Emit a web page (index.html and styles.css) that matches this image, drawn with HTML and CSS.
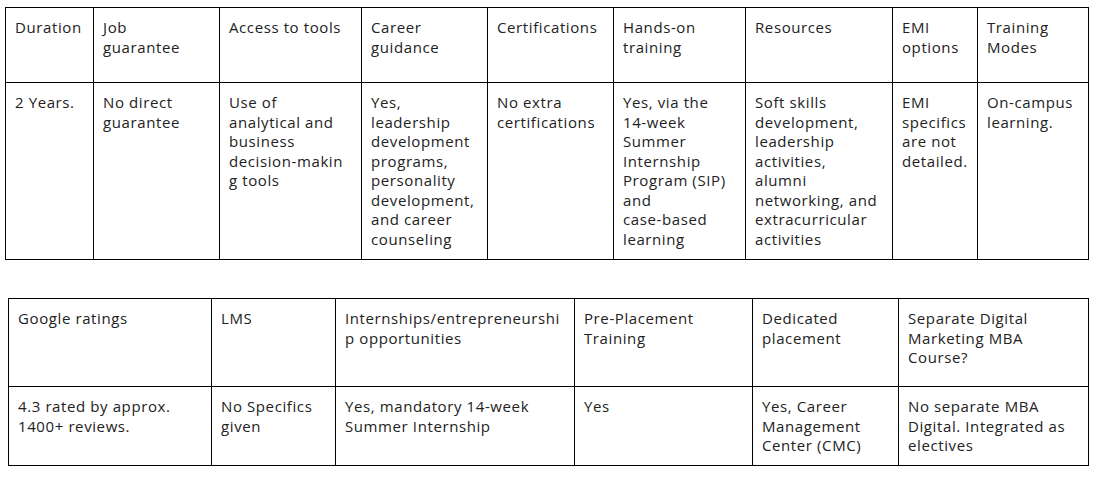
FILE: index.html
```html
<!DOCTYPE html>
<html lang="en">
<head>
<meta charset="utf-8">
<title>Program comparison</title>
<link rel="stylesheet" href="styles.css">
</head>
<body>
<div class="page">
  <div class="grid grid-a">
    <div class="cell head">Duration</div>
    <div class="cell head">Job<br>guarantee</div>
    <div class="cell head">Access to tools</div>
    <div class="cell head">Career<br>guidance</div>
    <div class="cell head">Certifications</div>
    <div class="cell head">Hands-on<br>training</div>
    <div class="cell head">Resources</div>
    <div class="cell head">EMI<br>options</div>
    <div class="cell head">Training<br>Modes</div>

    <div class="cell">2 Years.</div>
    <div class="cell">No direct<br>guarantee</div>
    <div class="cell">Use of<br>analytical and<br>business<br>decision-makin<br>g tools</div>
    <div class="cell">Yes,<br>leadership<br>development<br>programs,<br>personality<br>development,<br>and career<br>counseling</div>
    <div class="cell">No extra<br>certifications</div>
    <div class="cell">Yes, via the<br>14-week<br>Summer<br>Internship<br>Program (SIP)<br>and<br>case-based<br>learning</div>
    <div class="cell">Soft skills<br>development,<br>leadership<br>activities,<br>alumni<br>networking, and<br>extracurricular<br>activities</div>
    <div class="cell">EMI<br>specifics<br>are not<br>detailed.</div>
    <div class="cell">On-campus<br>learning.</div>
  </div>

  <div class="grid grid-b">
    <div class="cell head">Google ratings</div>
    <div class="cell head">LMS</div>
    <div class="cell head">Internships/entrepreneurshi<br>p opportunities</div>
    <div class="cell head">Pre-Placement<br>Training</div>
    <div class="cell head">Dedicated<br>placement</div>
    <div class="cell head">Separate Digital<br>Marketing MBA<br>Course?</div>

    <div class="cell">4.3 rated by approx.<br>1400+ reviews.</div>
    <div class="cell">No Specifics<br>given</div>
    <div class="cell">Yes, mandatory 14-week<br>Summer Internship</div>
    <div class="cell">Yes</div>
    <div class="cell">Yes, Career<br>Management<br>Center (CMC)</div>
    <div class="cell">No separate MBA<br>Digital. Integrated as<br>electives</div>
  </div>
</div>
</body>
</html>
```

FILE: styles.css
```css
* {
  box-sizing: border-box;
}

html, body {
  margin: 0;
  padding: 0;
  background: #ffffff;
}

body {
  font-family: "Open Sans", Lato, "Liberation Sans", sans-serif;
  font-size: 15px;
  line-height: 19.5px;
  letter-spacing: 0.6px;
  color: #222222;
}

.page {
  display: flex;
  flex-direction: column;
  align-items: flex-start;
  padding-top: 7px;
}

.grid {
  display: grid;
  border-top: 1px solid #000;
  border-left: 1px solid #000;
}

.grid-a {
  margin-left: 5px;
  grid-template-columns: 88px 126px 142px 126px 126px 132px 147px 85px 111px;
  grid-template-rows: 75px 177px;
}

.grid-b {
  margin-left: 8px;
  margin-top: 38px;
  grid-template-columns: 203px 124px 239px 178px 146px 190px;
  grid-template-rows: 88px 79px;
}

.cell {
  border-right: 1px solid #000;
  border-bottom: 1px solid #000;
  padding: 10px 9px;
  white-space: nowrap;
}
```
